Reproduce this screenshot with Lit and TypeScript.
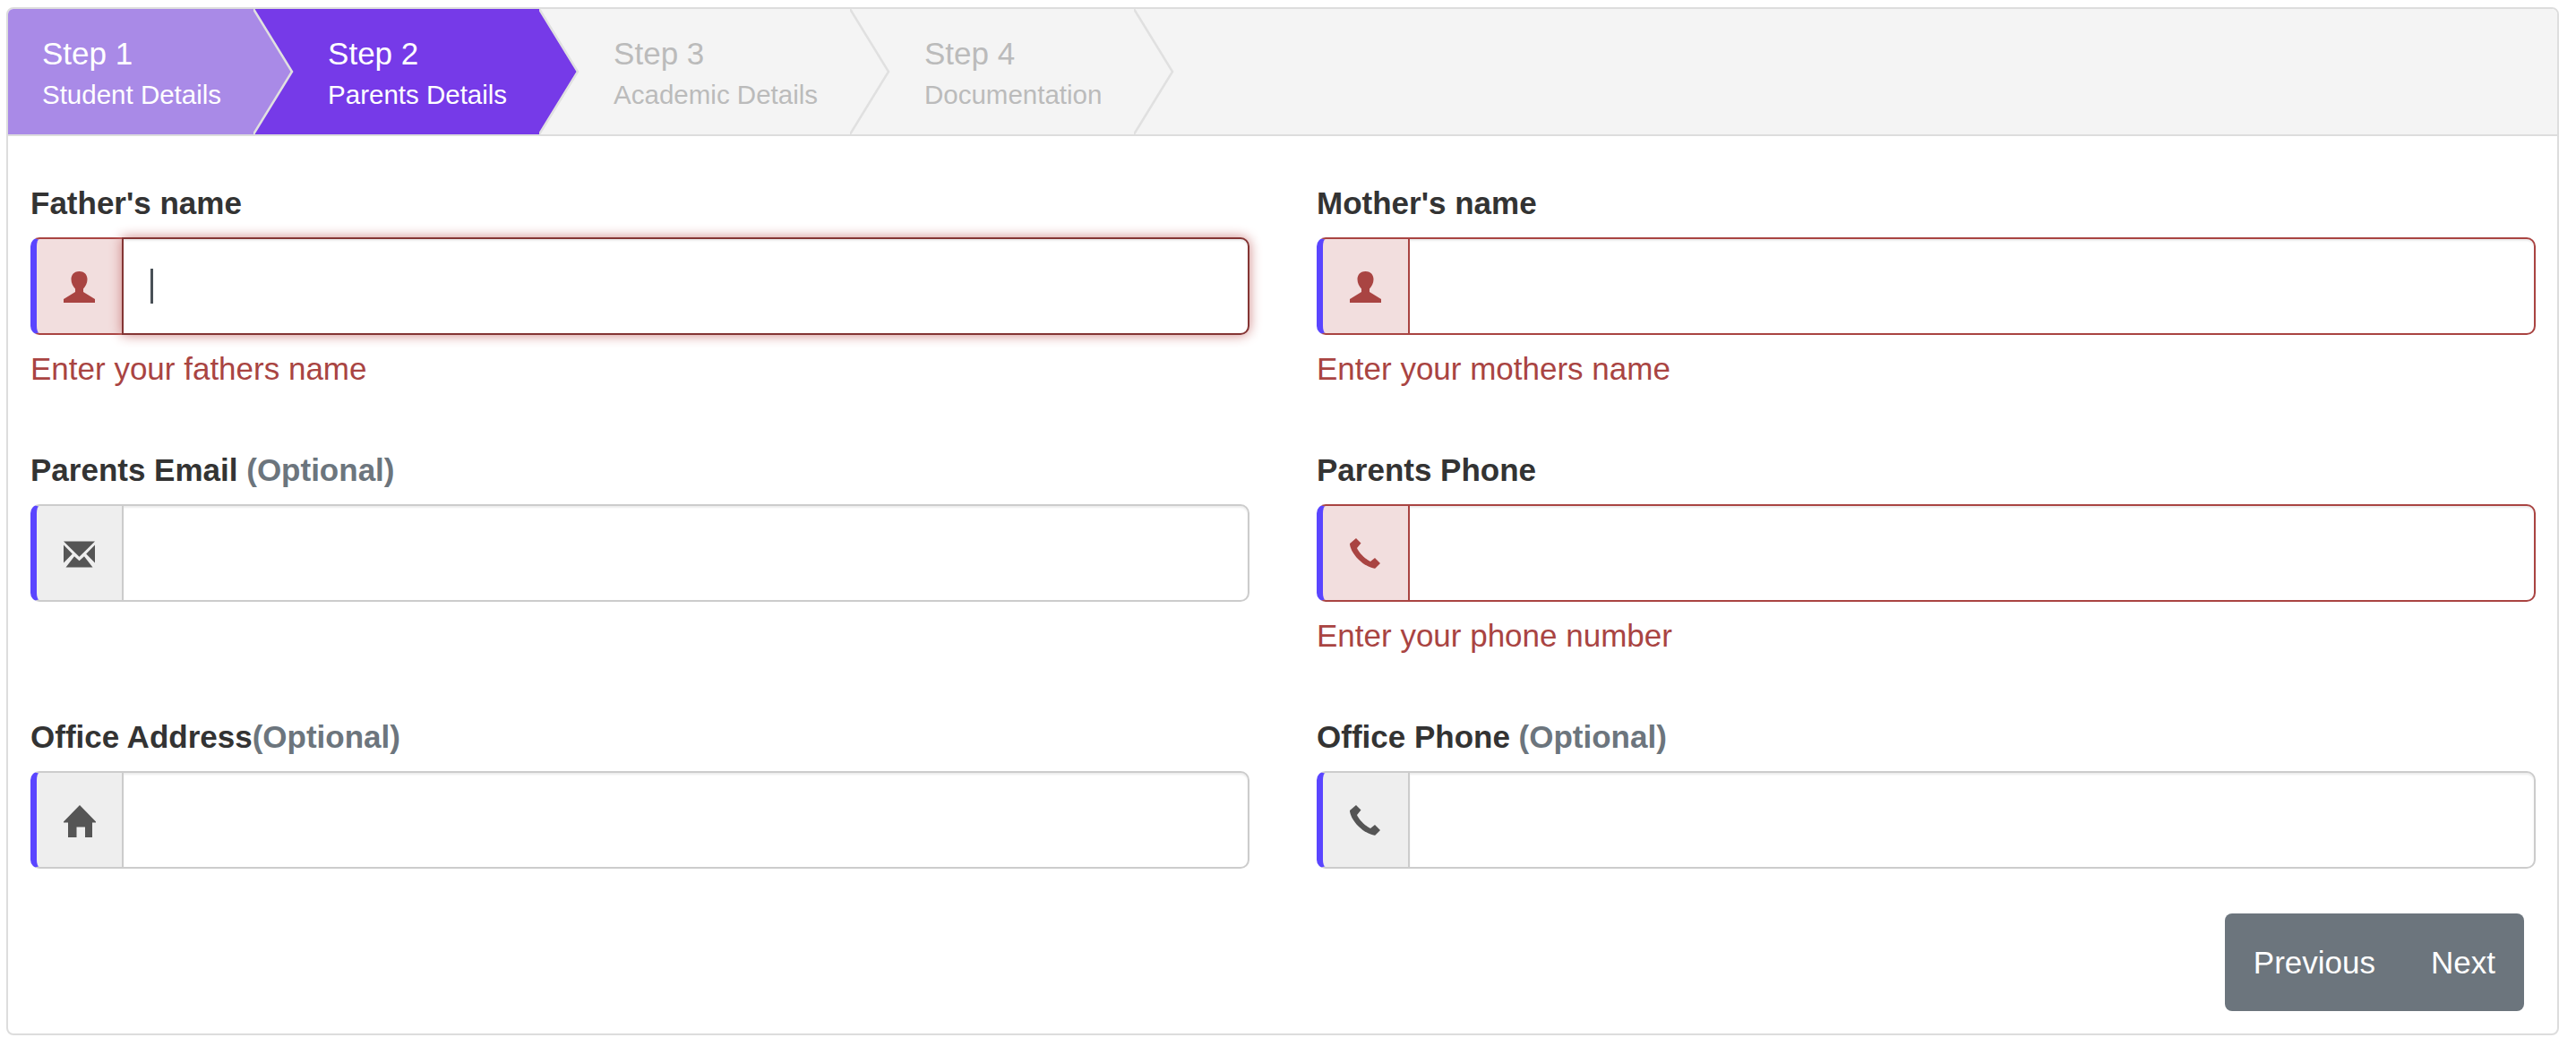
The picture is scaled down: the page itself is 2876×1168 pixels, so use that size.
import { LitElement, html, css, svg } from "lit";
import { customElement } from "lit/decorators.js";

const ICONS: Record<string, unknown> = {
  user: svg`<path d="M17.5 0C11 0 8.5 4.5 8.5 9C8.5 13 10.5 17 13 19.5V23L0 31V35H35V31L22 23V19.5C24.5 17 26.5 13 26.5 9C26.5 4.5 24 0 17.5 0Z"/>`,
  mail: svg`<path d="M0 3.5H35L17.5 20.7ZM0 7.5V27.5L9.8 17.5ZM35 7.5V27.5L25.2 17.5ZM12 20.3L17.5 25.3L23 20.3L32.5 32.5H2.5Z"/>`,
  home: svg`<path d="M18 0L36 18.5V19.5H32V36H24V24.5H14.5V36H5V19.5H0V18.5Z"/>`,
  phone: svg`<path d="M7 0L12.5 5.5L8 11C10 16 17 23 23 26L28 22L34 28L28.5 33.5C27 34.5 18 32 10 24C3 17 0 10 0 6Z"/>`,
};

const STEPS = [
  { title: "Step 1", sub: "Student Details", state: "done" },
  { title: "Step 2", sub: "Parents Details", state: "active" },
  { title: "Step 3", sub: "Academic Details", state: "todo" },
  { title: "Step 4", sub: "Documentation", state: "todo" },
];

const FIELDS = [
  { label: "Father's name", opt: "", icon: "user", error: "Enter your fathers name", focus: true },
  { label: "Mother's name", opt: "", icon: "user", error: "Enter your mothers name" },
  { label: "Parents Email ", opt: "(Optional)", icon: "mail", error: "" },
  { label: "Parents Phone", opt: "", icon: "phone", error: "Enter your phone number" },
  { label: "Office Address", opt: "(Optional)", icon: "home", error: "" },
  { label: "Office Phone ", opt: "(Optional)", icon: "phone", error: "" },
];

@customElement("app-root")
export class AppRoot extends LitElement {
  static styles = css`
    :host {
      display: block;
      font-family: "Liberation Sans", Arial, sans-serif;
      color: #333;
      padding: 8px 19px 12px 7px;
    }
    * { box-sizing: border-box; }
    .card {
      border: 2px solid #ddd;
      border-radius: 8px;
      height: 1148px;
      overflow: hidden;
      background: #fff;
    }
    .steps {
      display: flex;
      height: 142px;
      background: #f4f4f4;
      border-bottom: 2px solid #ddd;
    }
    .step {
      position: relative;
      padding: 0 36px 0 83px;
      height: 140px;
      white-space: nowrap;
      color: #bbb;
    }
    .step:first-child { padding-left: 38px; }
    .step:nth-child(1) { z-index: 4; }
    .step:nth-child(2) { z-index: 3; }
    .step:nth-child(3) { z-index: 2; }
    .step.done { background: #a98ae7; color: #fff; }
    .step.active { background: #763ae8; color: #fff; }
    .title { font-size: 35px; line-height: 40px; padding-top: 30px; }
    .sub { font-size: 29.5px; line-height: 36px; margin-top: 8px; }
    .tip { position: absolute; top: 0; left: 100%; width: 46px; height: 140px; display: block; }
    .tip polygon { fill: #f4f4f4; }
    .done .tip polygon { fill: #a98ae7; }
    .active .tip polygon { fill: #763ae8; }
    .tip polyline { fill: none; stroke: #e0e0e0; stroke-width: 2.5; }
    .grid {
      display: grid;
      grid-template-columns: 1361px 1361px;
      column-gap: 75px;
      grid-auto-rows: 298px;
      padding: 55px 0 0 25px;
    }
    .label { font-size: 35px; font-weight: 700; line-height: 40px; margin-bottom: 18px; white-space: pre; }
    .opt { color: #6c757d; }
    .group { display: flex; height: 109px; }
    .addon {
      width: 102px;
      flex: none;
      display: flex;
      align-items: center;
      justify-content: center;
      background: #eee;
      border: 2px solid #ccc;
      border-right: 0;
      border-left: 7px solid #5a45ff;
      border-radius: 10px 0 0 10px;
      color: #555;
    }
    .addon svg { width: 36px; height: 36px; display: block; fill: currentColor; margin-top: 3px; }
    .control { position: relative; flex: 1; display: flex; }
    input {
      flex: 1;
      width: 100%;
      height: 100%;
      border: 2px solid #ccc;
      border-radius: 0 10px 10px 0;
      background: #fff;
      outline: none;
      padding: 0 30px;
      box-shadow: inset 0 2px 2px rgba(0, 0, 0, 0.075);
    }
    .invalid .addon { background: #f2dede; border-color: #a94442; border-left-color: #5a45ff; color: #a94442; }
    .invalid input { border-color: #a94442; }
    .focus input {
      border-color: #843534;
      box-shadow: inset 0 2px 2px rgba(0, 0, 0, 0.075), 0 0 14px #ce8483;
    }
    .caret { position: absolute; left: 32px; top: 35px; width: 3px; height: 39px; background: #495057; }
    .error { color: #a94442; font-size: 35px; line-height: 40px; margin-top: 18px; }
    .actions { display: flex; justify-content: flex-end; padding: 0 37px 0 0; margin-top: -81px; }
    .btns { display: flex; height: 109px; background: #6c757d; border-radius: 8px; }
    button {
      border: 0;
      background: none;
      color: #fff;
      font: inherit;
      font-size: 35px;
      padding: 0 32px;
    }
    button + button { padding-left: 30px; }
  `;

  render() {
    return html`
      <div class="card">
        <div class="steps">
          ${STEPS.map(
            (s) => html`<div class="step ${s.state}">
              <div class="title">${s.title}</div>
              <div class="sub">${s.sub}</div>
              <svg class="tip" viewBox="0 0 46 140" preserveAspectRatio="none">
                <polygon points="0,0 43,70 0,140"></polygon>
                <polyline points="0,0 43,70 0,140"></polyline>
              </svg>
            </div>`
          )}
        </div>
        <div class="grid">
          ${FIELDS.map(
            (f) => html`<div class="field ${f.error ? "invalid" : ""} ${f.focus ? "focus" : ""}">
              <div class="label">${f.label}<span class="opt">${f.opt}</span></div>
              <div class="group">
                <div class="addon"><svg viewBox="0 0 36 36">${ICONS[f.icon]}</svg></div>
                <div class="control">
                  <input type="text" aria-label=${f.label} />
                  ${f.focus ? html`<span class="caret"></span>` : ""}
                </div>
              </div>
              ${f.error ? html`<div class="error">${f.error}</div>` : ""}
            </div>`
          )}
        </div>
        <div class="actions">
          <div class="btns"><button>Previous</button><button>Next</button></div>
        </div>
      </div>
    `;
  }
}
